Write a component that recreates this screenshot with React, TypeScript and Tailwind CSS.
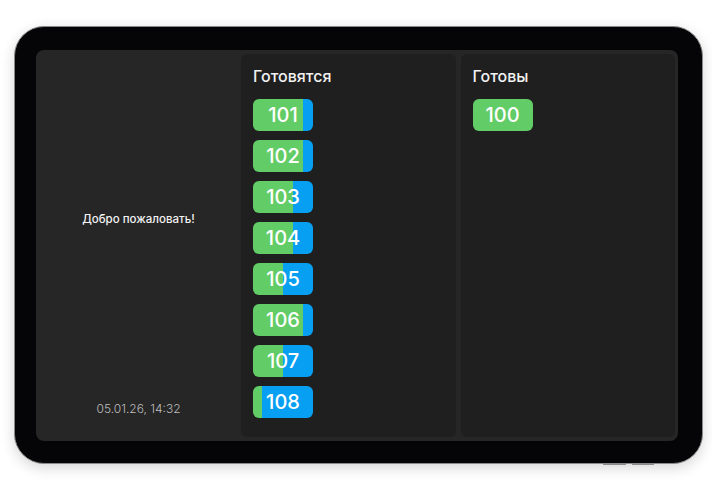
import React from "react";

type Order = { id: number; progress: number };

const cooking: Order[] = [
  { id: 101, progress: 83 },
  { id: 102, progress: 83 },
  { id: 103, progress: 66 },
  { id: 104, progress: 66 },
  { id: 105, progress: 50 },
  { id: 106, progress: 83 },
  { id: 107, progress: 50 },
  { id: 108, progress: 15 },
];

const ready: number[] = [100];

const GREEN = "#62cc66";
const BLUE = "#079ff2";

function Badge({ id, progress }: { id: number; progress: number }) {
  return (
    <div
      className="flex h-[32px] w-[60px] items-center justify-center rounded-[6px] text-[20px] font-medium leading-none text-white"
      style={{
        background: `linear-gradient(to right, ${GREEN} ${progress}%, ${BLUE} ${progress}%)`,
      }}
    >
      {id}
    </div>
  );
}

function Column({ title, children }: { title: string; children: React.ReactNode }) {
  return (
    <section className="flex flex-1 flex-col rounded-[6px] bg-[#1f1f1f] pl-[12px] pt-[12px]">
      <h2 className="text-[16px] font-medium leading-[20px] text-[#f2f2f2]">{title}</h2>
      <div className="mt-[13px] flex flex-col gap-[9px]">{children}</div>
    </section>
  );
}

export default function App() {
  return (
    <div
      className="h-[496px] w-[712px] bg-white pl-[14px] pt-[26px]"
      style={{ fontFamily: "Inter, 'Noto Sans', sans-serif" }}
    >
      <div className="relative h-[438px] w-[689px] rounded-[30px] border-[1.5px] border-[#8a8a8a] bg-[#050507] pb-[22px] pl-[21px] pr-[24px] pt-[23px] shadow-[0_4px_14px_rgba(0,0,0,0.16)]">
        <div className="flex h-full rounded-[8px] bg-[#262626] py-[4px] pr-[3px]">
          <aside className="flex w-[205px] flex-col">
            <div className="flex flex-1 items-center justify-center text-[11.5px] font-medium text-[#f2f2f2]">
              Добро пожаловать!
            </div>
            <div className="pb-[20px] pt-[16px] text-center text-[12px] font-light leading-[16px] text-[#bdbdbd]">
              05.01.26, 14:32
            </div>
          </aside>
          <div className="flex flex-1 gap-[5px]">
            <Column title="Готовятся">
              {cooking.map((o) => (
                <Badge key={o.id} id={o.id} progress={o.progress} />
              ))}
            </Column>
            <Column title="Готовы">
              {ready.map((id) => (
                <Badge key={id} id={id} progress={100} />
              ))}
            </Column>
          </div>
        </div>
        {/* side buttons along the lower edge */}
        <div className="absolute bottom-[-2px] left-[588px] flex gap-[6px]">
          <span className="h-[1px] w-[23px] bg-[#8c8c8c]" />
          <span className="h-[1px] w-[22px] bg-[#8c8c8c]" />
        </div>
      </div>
    </div>
  );
}
